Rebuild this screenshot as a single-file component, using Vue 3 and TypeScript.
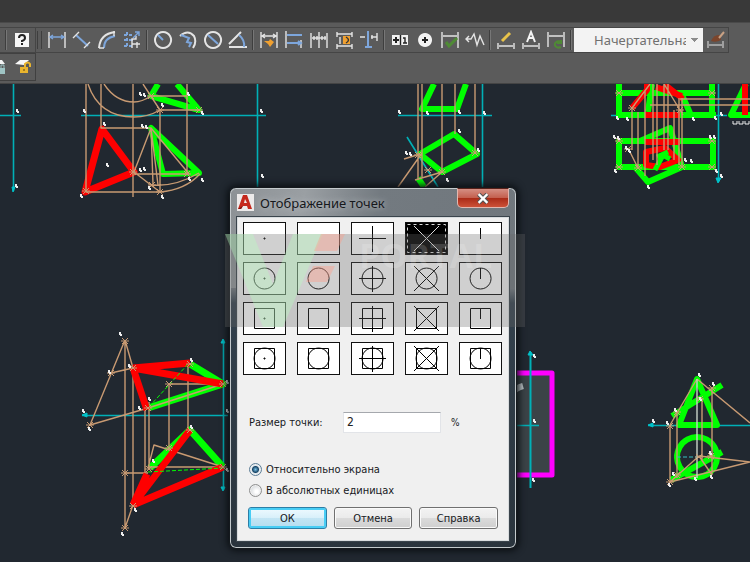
<script setup lang="ts">
import { ref } from 'vue'

interface Stroke { d: string; c?: string; w?: number; f?: string }
interface Tool { name: string; strokes: Stroke[] }

const W = '#e4e4e4'
const B = '#7da6dc'
const O = '#f0a030'
const G = '#4f8a35'

const groups: Tool[][] = [
  [
    { name: 'Линейный размер', strokes: [{ d: 'M2 2v16M18 2v16', c: W }, { d: 'M3 7h14M6 5L3 7l3 2M14 5l3 2-3 2', c: B }] },
    { name: 'Параллельный размер', strokes: [{ d: 'M4 5l12 11', c: B, w: 2 }, { d: 'M1 8l6-6M12 18l6-6', c: W }] },
    { name: 'Длина дуги', strokes: [{ d: 'M2 18Q3 4 18 2', c: W, w: 2 }, { d: 'M7 18Q7 8 18 6', c: B, w: 2 }, { d: 'M2 18h5M17 1v5', c: W }] },
    { name: 'Ординатный размер', strokes: [{ d: 'M2 5h3m2 0h3M2 10h3m2 0h4M2 16h3m2 0h3M5 2v3m0 3v3m0 2v3', c: B, w: 2 }, { d: 'M10 18V9h4V6M10 14h8M15 12v6', c: W }, { d: 'M11 8l6-6M13 2h4v4', c: B }] },
  ],
  [
    { name: 'Радиус', strokes: [{ d: 'M10 2a8 8 0 1 0 .1 0z', c: W, w: 2 }, { d: 'M10 10L5 5', c: B, w: 2 }] },
    { name: 'Радиус с изломом', strokes: [{ d: 'M2 6Q10-1 16 6q3 6-1 12', c: W, w: 2 }, { d: 'M3 5l8 3-2 4 4 1-2 4', c: B, w: 2 }] },
    { name: 'Диаметр', strokes: [{ d: 'M10 2a8 8 0 1 0 .1 0z', c: W, w: 2 }, { d: 'M5 5l10 9', c: B, w: 2 }] },
    { name: 'Угловой размер', strokes: [{ d: 'M1 17h18M1 14L13 2', c: W, w: 2 }, { d: 'M11 5q6 5 5 12', c: B, w: 2 }] },
  ],
  [
    { name: 'Быстрый размер', strokes: [{ d: 'M2 2v16M18 2v16M3 6h14M6 4L3 6l3 2M14 4l3 2-3 2', c: W }, { d: 'M5 11l5 0 1-2 4 3-4 5-2-3z', f: O }] },
    { name: 'Базовый размер', strokes: [{ d: 'M2 1v17M17 10v8', c: W }, { d: 'M3 5h15M3 13h14M14 11l3 2-3 2', c: B, w: 2 }] },
    { name: 'Размерная цепь', strokes: [{ d: 'M2 3v15M10 2v16M18 3v15M3 8h14', c: W }, { d: 'M5 6v4M13 6v4M8 6v4M16 6v4', c: W }] },
    { name: 'Расстояние между размерами', strokes: [{ d: 'M3 2v5M18 2v5M3 4h15M3 14v5M18 14v5M3 16h15M6 7v7', c: W }, { d: 'M9 6h7v8H9z', f: O }, { d: 'M12 7q5 3 0 6', c: '#333' }] },
    { name: 'Разрыв размера', strokes: [{ d: 'M1 7h5M12 7h6M18 3v8M13 5v4', c: W }, { d: 'M9 1v15M6 17h7', c: B, w: 2 }] },
  ],
  [
    { name: 'Допуск', strokes: [{ d: 'M2 5h16v10H2z', f: '#f0f0f0' }, { d: 'M3 10h6M6 7v6', c: '#222', w: 2 }, { d: 'M10.500 5v10M13 8h2v5M13 13h4', c: '#222' }] },
    { name: 'Маркер центра', strokes: [{ d: 'M10 3a7 7 0 1 0 .1 0z', f: '#f2f2f2' }, { d: 'M10 7v6M7 10h6', c: '#222', w: 2 }] },
    { name: 'Контроль', strokes: [{ d: 'M2 2v16M18 2v16M3 6h14', c: W }, { d: 'M6 12l3 4 8-8', c: G, w: 3 }] },
    { name: 'Размер с изломом', strokes: [{ d: 'M1 9h5l3-5 3 11 3-9 4 9M4 6L1 9l3 3', c: W }] },
  ],
  [
    { name: 'Редактировать размер', strokes: [{ d: 'M2 13v6M18 13v6M3 16h14', c: W }, { d: 'M6 11l8-8', c: '#e8c34a', w: 3 }] },
    { name: 'Редактировать текст', strokes: [{ d: 'M2 13v6M18 13v6M3 16h14', c: W }, { d: 'M6 12l4-10 4 10M7 8h6', c: '#f4f4f4', w: 2 }] },
    { name: 'Обновить размер', strokes: [{ d: 'M2 2v15M18 2v15M3 6h14', c: W }, { d: 'M15 12a4 3 0 1 0 0 5M15 10v3h-4', c: G, w: 2 }] },
  ],
]

const TAN = '#c89a72'
const CYAN = '#00b0b6'
const GREEN = '#00ff00'
const RED = '#fe0000'

const drawing: Stroke[] = [
  { d: 'M500 373H552V475H500z', f: '#3b4347' },
  { d: 'M0 115.500H21M13.500 84V191M81 115.500H266M257.500 84V187M398 115.500H492M482.500 84V187M611 115.500H727M718.500 84V182M82 415.500H228M223.500 340V490M515 425.500H539M648 425.500H750M407 137L438 187', c: CYAN, w: 1.6 },
  { d: 'M434 84L422 109H457L466 84M420 154L454 134 477 154 442 172zM418 178L424 187', c: GREEN, w: 6 },
  { d: 'M158 84L151 96 199 110 177 84M151 128L163 174 199 173z', c: GREEN, w: 6 },
  { d: 'M619 84V115M619 93H713M712 84V115M616 115H716M652 84L648 112M682 95L690 113M746 84L731 115H750M619 141H713V167H619zM635 167L648 182 682 167 670 128 640 141', c: GREEN, w: 6 },
  { d: 'M102 129L134 172 85 192z', c: RED, w: 7 },
  { d: 'M647 84V90L632 108M664 84L683 99M656 87L682 96M645 115H680M745 84V115M645 142H680M646 152L665 148 678 160 660 167 646 165z', c: RED, w: 6 },
  { d: 'M655 170L663 155 670 159M657 157L668 152', c: GREEN, w: 5 },
  { d: 'M86 84V192H160M101 84V128H151M133 84V197M160 110V192M187 84V175M88 84Q99 117 134 117 148 117 160 110M104 84Q116 102 134 102 142 102 151 96H187M160 110H200M134 172L151 128 158 185M151 128L153 184M134 172L160 192M151 128L189 174H134M152 185Q175 187 199 173M160 192Q185 190 200 174M143 84L160 110', c: TAN },
  { d: 'M418 84V180M422 84V178M442 84V172M455 84V134M475 84V154M422 153L398 187M404 159L420 154M415 180L442 172M425 187L442 172', c: TAN },
  { d: 'M632 108V150M638 112V168M645 90V176M653 84V160M657 84V165M664 84V150M668 84V150M674 110V160M679 98V165M682 98V166M680 99H750M650 105H750M632 108L650 84M683 115L664 84M628 148L638 168', c: TAN },
  { d: 'M190 364L223 384 148 408M150 468L190 430 223 467', c: GREEN, w: 7 },
  { d: 'M125 340V528M133 368V505M145 408V474M149 402V470M169 384V448M188 364V430M125 340L90 425 148 408M125 340L133 368 111 373M125 473H148M125 528L133 505M169 384H223M148 408L223 384M148 468L154 445 223 467H148', c: TAN },
  { d: 'M133 368L190 363M133 368L223 384M133 368L147 410M133 505L190 430M133 505L223 467M133 505L147 474', c: RED, w: 7 },
  { d: 'M500 373H552V475H500', c: '#ff00ff', w: 5 },
  { d: 'M530.500 352V488', c: CYAN, w: 2 },
  { d: 'M512 393Q516 388 523 386', c: '#bfc6c8', w: 6 },
  { d: 'M697 379L679 425H717zM672 416L722 385M697 437a20 20 0 1 0 .1 0zM671 480L722 452', c: GREEN, w: 6 },
  { d: 'M670 425V482M677 412V478M702 398V460M712 388V475M697 379L750 423M697 379L670 425M670 482L699 456 712 475M699 456L750 462 670 482', c: TAN },
  { d: 'M697 379V478', c: '#c9d3c9' },
]
const dashes: Stroke[] = [
  { d: 'M188 364L148 408M148 472L223 468', c: GREEN },
  { d: 'M677 457H697', c: '#36bfc4' },
]
const crosses: [number, number][] = [
  [86, 191], [133, 172], [151, 96], [160, 110], [160, 192], [187, 174], [152, 185], [199, 110], [418, 155], [428, 170], [442, 172],
  [475, 153], [619, 93], [619, 141], [619, 167], [712, 93], [712, 141], [712, 167], [638, 168], [682, 167], [125, 341], [111, 373],
  [90, 425], [133, 368], [148, 408], [169, 384], [190, 364], [223, 384], [125, 473], [125, 528], [133, 506], [149, 469], [169, 448],
  [190, 430], [223, 467], [677, 412], [700, 399], [712, 388], [670, 426], [670, 482], [699, 457], [711, 456], [677, 475], [632, 108], [680, 110], [628, 149],
]
const marks: [number, number][] = [
  [17, 111], [16, 186], [84, 111], [104, 124], [140, 94], [144, 95], [162, 105], [188, 94], [202, 113], [142, 126], [146, 127], [107, 165], [140, 170], [144, 169],
  [81, 196], [162, 197], [149, 188], [189, 179], [202, 180], [261, 111], [262, 176], [399, 112], [427, 113], [459, 112], [484, 113], [459, 131],
  [478, 150], [406, 153], [410, 154], [447, 180], [614, 137], [618, 138], [615, 171], [617, 118], [627, 119], [693, 119], [715, 118], [710, 137], [714, 137], [716, 171],
  [721, 114], [721, 176], [685, 160], [691, 161], [626, 148], [629, 151], [648, 187], [120, 334], [109, 372], [89, 429], [129, 366], [139, 408], [149, 399],
  [191, 360], [191, 427], [227, 382], [227, 411], [227, 470], [153, 461], [135, 510], [122, 534], [83, 411], [534, 356], [534, 421], [533, 480],
  [699, 375], [653, 421], [667, 423], [675, 410], [713, 384], [669, 485], [673, 474], [695, 479], [711, 477], [710, 453], [700, 399],
]

const cells = Array.from({ length: 20 }, (_, i) => i)
const selected = ref(3)
const size = ref('2')
const mode = ref('screen')
const style = ref('Начертательная')

const centers = ['M21 16h1v1h-1z', '', 'M8 16.500H35M21.500 4V30', 'M9 4L34 29M34 4L9 29', 'M21.500 6V17']
function glyph(i: number): string {
  const row = Math.floor(i / 5)
  const parts = [centers[i % 5]]
  if (row % 2 === 1) parts.push('M21.500 6a10.500 10.500 0 1 0 .1 0z')
  if (row >= 2) parts.push('M11.500 6.500h20v20h-20z')
  return parts.join('')
}
</script>

<template>
  <div class="app">
    <header class="ribbon"></header>
    <div class="toolbars">
      <div class="bar">
        <div class="panel help">
          <i class="sep"></i>
          <button class="tool" aria-label="Справка по программе">
            <svg viewBox="0 0 20 20"><rect x="3" y="3" width="14" height="14" fill="#f6f6f6" /><path d="M7 8Q7 5 10 5t3 3q0 2-3 3v1M10 13v2" fill="none" stroke="#222" stroke-width="2" /></svg>
          </button>
        </div>
        <div class="panel">
          <i class="grip"></i>
          <template v-for="(g, gi) in groups" :key="gi">
            <button v-for="t in g" :key="t.name" class="tool" :aria-label="t.name">
              <svg viewBox="0 0 20 20">
                <path v-for="(s, si) in t.strokes" :key="si" :d="s.d" :fill="s.f ?? 'none'" :stroke="s.c ?? 'none'" :stroke-width="s.w ?? 1.4" />
              </svg>
            </button>
            <i class="sep"></i>
          </template>
          <select v-model="style" class="style-select" aria-label="Размерный стиль">
            <option>Начертательная</option>
          </select>
          <button class="tool" aria-label="Размерные стили">
            <svg viewBox="0 0 20 20"><path d="M2 11v7M17 11v7M3 15h13" stroke="#e4e4e4" /><path d="M5 11Q8 4 14 5l1 5q-5 3-10 1z" fill="#7b452c" /><path d="M13 8l5-6" stroke="#c9a184" stroke-width="2" /></svg>
          </button>
        </div>
      </div>
      <div class="bar second">
        <div class="panel layers">
          <button class="tool narrow" aria-label="Заблокировать слой">
            <svg viewBox="0 0 10 20"><path d="M0 3h2l3 4H0z" fill="#f4f4f4" /><path d="M0 11h5v6H0z" fill="#9fc4c4" /><path d="M1 11V8h3v3" fill="none" stroke="#9fc4c4" /></svg>
          </button>
          <button class="tool" aria-label="Разблокировать слой">
            <svg viewBox="0 0 20 20"><path d="M2 7l5-4h9l-5 5z" fill="#f8f8f8" /><path d="M7 10h8v6H7z" fill="#e9b52e" /><path d="M12 10V7q3-3 5 0v3" fill="none" stroke="#e9b52e" stroke-width="2" /><path d="M11 12v2" stroke="#5a4210" /></svg>
          </button>
        </div>
      </div>
    </div>

    <main class="canvas">
      <svg class="drawing" viewBox="0 84 750 478" preserveAspectRatio="xMinYMin slice" aria-hidden="true">
        <path v-for="(s, i) in drawing" :key="i" :d="s.d" :fill="s.f ?? 'none'" :stroke="s.c ?? 'none'" :stroke-width="s.w ?? 1.4" stroke-linejoin="round" />
        <path v-for="(s, i) in dashes" :key="'d' + i" :d="s.d" fill="none" :stroke="s.c" stroke-dasharray="4 2" />
        <path v-for="(p, i) in crosses" :key="'c' + i" :d="`M${p[0] - 3} ${p[1] - 3}l6 6m0-6l-6 6m-1-3h8`" :stroke="TAN" fill="none" />
        <path v-for="(p, i) in marks" :key="'m' + i" :d="`M${p[0] - 1} ${p[1] - 2}h2v2h1v2h-2v-1h-1z`" fill="#eee" />
        <path d="M733 121v3h4v-3m2 0v3h4v-3m2 0v3h4v-3" stroke="#eee" fill="none" />
        <path d="M12 187l1 5 2-5zM221 343l2-4 2 4zM82 415l5-2v4zM528 355l2-4 3 4zM648 425l5-2v4zM716 178l2 5 3-5zM221 487l2 4 2-4z" fill="#00c2c9" stroke="#00c2c9" />
      </svg>

      <section class="dialog" role="dialog" aria-labelledby="dialog-title">
        <header class="titlebar">
          <svg class="logo" viewBox="0 0 17 17"><rect width="17" height="17" fill="#eceaea" /><path d="M1 15L6 1h4l5 14h-4l-1-3H6l-2 3zM7 9h3L8 5z" fill="#c5281c" fill-rule="evenodd" /><path d="M1 15l3-2 2-1-2 3z" fill="#7c120c" /></svg>
          <h1 id="dialog-title">Отображение точек</h1>
          <button class="close" aria-label="Закрыть">
            <svg viewBox="0 0 12 10"><path d="M2 1l8 8M10 1L2 9" stroke="#555" stroke-width="4" /><path d="M2 1l8 8M10 1L2 9" stroke="#fff" stroke-width="2" /></svg>
          </button>
        </header>
        <form class="client" @submit.prevent>
          <div class="styles">
            <button v-for="i in cells" :key="i" type="button" class="cell" :class="{ on: selected === i }" :aria-label="'Стиль точки ' + (i + 1)" @click="selected = i">
              <svg viewBox="0 0 43 33"><rect v-if="selected === i" class="focus" x="2.500" y="2.500" width="38" height="28" /><path :d="glyph(i)" /></svg>
            </button>
          </div>
          <div class="size">
            <label for="point-size">Размер точки:</label>
            <input id="point-size" v-model="size" type="text" />
            <span>%</span>
          </div>
          <div class="modes">
            <label><input v-model="mode" type="radio" name="mode" value="screen" />Относительно экрана</label>
            <label><input v-model="mode" type="radio" name="mode" value="units" />В абсолютных единицах</label>
          </div>
          <div class="actions">
            <button class="default">ОК</button>
            <button type="button">Отмена</button>
            <button type="button">Справка</button>
          </div>
        </form>
      </section>

      <svg class="watermark" viewBox="0 0 300 93" aria-hidden="true">
        <path d="M0 0h300v93H0z" fill="#666" fill-opacity=".31" />
        <path d="M0 0h28l20 50L68 0h30L58 93H38z" fill="#b8ffc0" fill-opacity=".36" />
        <path d="M96 0h24l-8 17H89zM88 32h22l-8 16H81z" fill="#ff9a88" fill-opacity=".4" />
        <text x="134" y="34" class="mark-text">PORTAL</text>
      </svg>
    </main>
  </div>
</template>

<style>
body { margin: 0; background: #212830; }
</style>

<style scoped>
.app { min-height: 100vh; display: flex; flex-direction: column; background: #212830; }
button { padding: 0; border: 0; background: none; font: inherit; color: inherit; }
.ribbon { height: 23px; background: #393939; border-bottom: 1px solid #4a4a4a; box-sizing: border-box; }
.toolbars { height: 61px; box-sizing: border-box; padding-top: 4px; background: #5b5b5b; border-bottom: 1px solid #444; }
.bar { display: flex; height: 26px; }
.bar.second { height: 28px; }
.panel { display: flex; align-items: center; box-sizing: border-box; border: 1px solid #454545; border-left: 0; background: #5b5b5b; }
.help { width: 36px; padding-left: 3px; }
.layers { width: 36px; justify-content: flex-end; border-color: #404040; }
.grip { width: 3px; height: 18px; margin: 0 2px 0 1px; border: solid #3e3e3e; border-width: 0 1px; }
.sep { position: relative; width: 6px; height: 20px; background: linear-gradient(90deg, transparent 2px, #3e3e3e 2px, #3e3e3e 3px, #777 3px, #777 4px, transparent 4px); }
.tool { display: grid; place-items: center; flex: none; width: 25px; height: 24px; }
.tool svg { width: 20px; height: 20px; }
.tool.narrow { width: 10px; }
.tool.narrow svg { width: 10px; }
.style-select {
  width: 129px; height: 24px; padding: 0 17px 0 20px; border: 0; border-radius: 0; appearance: none;
  color: #707070; font: 13px "Noto Sans", sans-serif; background-color: #f3f3f3;
  background-image: linear-gradient(45deg, transparent 50%, #8c8c8c 50%), linear-gradient(-45deg, transparent 50%, #8c8c8c 50%);
  background-position: right 8px center, right 4px center;
  background-size: 4px 4px; background-repeat: no-repeat;
}
.canvas { position: relative; flex: 1; min-height: 478px; overflow: hidden; }
.drawing { position: absolute; inset: 0; width: 100%; height: 100%; }
.watermark { position: absolute; left: 225px; top: 150px; width: 300px; overflow: visible; pointer-events: none; }
.mark-text { font: bold 34px "Open Sans", sans-serif; fill: #fff; fill-opacity: .16; }
.dialog {
  position: absolute; left: 229px; top: 103px; width: 288px; box-sizing: border-box;
  padding: 0 7px 7px; border: 1px solid #14191d; border-radius: 7px;
  background: linear-gradient(100deg, #8c9195 0, #9a9fa3 25%, #737a80 50%, #70777d 100%) no-repeat 0 0 / 100% 100px, linear-gradient(#737a80 0, #737a80 100px, #33414d 115px, #2a343d);
  box-shadow: inset 0 0 0 1px #c4cacd, 0 0 7px 2px #0b0f13;
  font: 11px "DejaVu Sans Condensed", "DejaVu Sans", sans-serif; color: #16181c;
}
.titlebar { display: flex; align-items: center; height: 29px; }
.logo { width: 17px; height: 17px; }
h1 { flex: 1; margin: 0 0 0 6px; font: 13px "Noto Sans", sans-serif; text-shadow: 0 0 6px #c6cbce; white-space: nowrap; }
.close {
  align-self: flex-start; display: grid; place-items: center; width: 52px; height: 20px; box-sizing: border-box;
  border: 1px solid #e2b8b0; border-top-color: #572019; border-radius: 0 0 5px 5px;
  background: linear-gradient(#d58f83, #c4604f 48%, #a92a17 50%, #cd5137);
}
.close svg { width: 14px; height: 11px; }
.client { box-sizing: border-box; height: 324px; padding: 4px 5px; border: 1px solid #d8dcde; background: #f0f0f0; box-shadow: 0 0 0 1px #3a444c; }
.styles { display: grid; grid-template-columns: repeat(5, 43px); gap: 7px 11px; }
.cell { height: 33px; background: #fff; outline: 1px solid #111; outline-offset: -1px; }
.cell svg { display: block; width: 43px; height: 33px; }
.cell path { fill: none; stroke: #000; }
.cell.on { background: #000; }
.cell.on path { stroke: #ddd; }
.focus { fill: none; stroke: #ddd; stroke-dasharray: 3 3; }
.size { display: flex; align-items: center; margin-top: 37px; padding-left: 6px; }
.size label { width: 94px; }
.size input { width: 98px; height: 21px; box-sizing: border-box; padding: 0 3px 2px; border: 1px solid #e2e4e8; border-top-color: #a5a8ad; background: #fff; font: 12px "DejaVu Sans Condensed", "DejaVu Sans", sans-serif; color: #222; }
.size span { margin-left: 10px; font-size: 10px; }
.modes { display: grid; gap: 6px; margin-top: 29px; padding-left: 6px; }
.modes label { display: flex; align-items: center; gap: 4px; height: 15px; white-space: nowrap; }
.modes input { appearance: none; width: 13px; height: 13px; margin: 0; box-sizing: border-box; border: 1px solid #8e8f8f; border-radius: 50%; background: radial-gradient(circle at 60% 60%, #fff 15%, #c8ccd0 90%); box-shadow: inset 0 0 0 1px #f0f0f0; }
.modes input:checked { border-color: #5c7d96; background: radial-gradient(circle, #7cc4e8 0, #174466 3px, #dce6ec 4px); }
.actions { display: grid; grid-template-columns: repeat(3, 1fr); gap: 7px; margin: 9px 5px 0; }
.actions button { height: 22px; border: 1px solid #707070; border-radius: 3px; background: linear-gradient(#f3f3f3, #ebebeb 48%, #dbdbdb 50%, #cfcfcf); box-shadow: inset 0 0 0 1px #fafafa; }
.actions .default { border-color: #2c7ea6; box-shadow: inset 0 0 0 2px #48cdf5; background: linear-gradient(#effaff, #d9f0fa 48%, #c3e5f4 50%, #b5dcee); }
</style>
